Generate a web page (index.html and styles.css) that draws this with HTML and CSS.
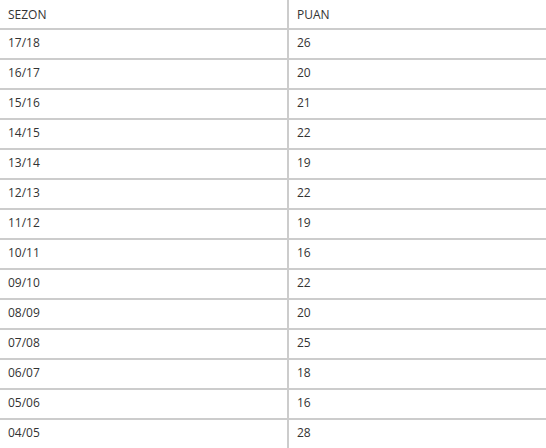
FILE: index.html
```html
<!DOCTYPE html>
<html lang="tr">
<head>
<meta charset="utf-8">
<title>Sezon Puan</title>
<link rel="stylesheet" href="styles.css">
</head>
<body>
<table class="stats">
  <thead>
    <tr><th class="col-season">SEZON</th><th class="col-points">PUAN</th></tr>
  </thead>
  <tbody>
    <tr><td class="col-season">17/18</td><td class="col-points">26</td></tr>
    <tr><td class="col-season">16/17</td><td class="col-points">20</td></tr>
    <tr><td class="col-season">15/16</td><td class="col-points">21</td></tr>
    <tr><td class="col-season">14/15</td><td class="col-points">22</td></tr>
    <tr><td class="col-season">13/14</td><td class="col-points">19</td></tr>
    <tr><td class="col-season">12/13</td><td class="col-points">22</td></tr>
    <tr><td class="col-season">11/12</td><td class="col-points">19</td></tr>
    <tr><td class="col-season">10/11</td><td class="col-points">16</td></tr>
    <tr><td class="col-season">09/10</td><td class="col-points">22</td></tr>
    <tr><td class="col-season">08/09</td><td class="col-points">20</td></tr>
    <tr><td class="col-season">07/08</td><td class="col-points">25</td></tr>
    <tr><td class="col-season">06/07</td><td class="col-points">18</td></tr>
    <tr><td class="col-season">05/06</td><td class="col-points">16</td></tr>
    <tr><td class="col-season">04/05</td><td class="col-points">28</td></tr>
  </tbody>
</table>
</body>
</html>
```
FILE: styles.css
```css
html, body {
  margin: 0;
  padding: 0;
  background: #ffffff;
}

body {
  font-family: "Open Sans", "Noto Sans", sans-serif;
  font-size: 12px;
  color: #333333;
}

.stats {
  width: 100%;
  border-spacing: 0;
  border-collapse: separate;
  table-layout: fixed;
}

.stats th,
.stats td {
  box-sizing: border-box;
  height: 30px;
  padding: 0 8px 2px;
  text-align: left;
  font-weight: 400;
  vertical-align: middle;
  border-bottom: 2px solid #cccccc;
  line-height: 18px;
}

.stats th {
  padding: 2px 8px 0;
}

.stats .col-season {
  width: 289px;
  border-right: 2px solid #cccccc;
}
```
